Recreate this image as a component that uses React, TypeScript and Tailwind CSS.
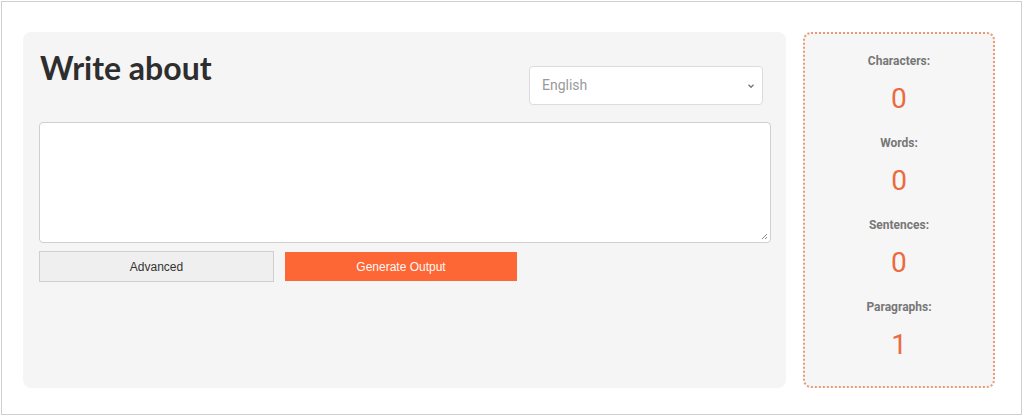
import React from "react";

const stats = [
  { label: "Characters:", value: "0" },
  { label: "Words:", value: "0" },
  { label: "Sentences:", value: "0" },
  { label: "Paragraphs:", value: "1" },
];

export default function App() {
  return (
    <div className="bg-white w-[1024px] h-[417px] pt-[1px] pl-[1px]" style={{ fontFamily: "Roboto, 'Liberation Sans', sans-serif" }}>
      <div className="w-[1021px] h-[414px] border border-[#cfcfcf] flex pl-[21px] pt-[30px] gap-[17px]">
        <div className="w-[763px] h-[356px] bg-[#f5f5f5] rounded-[8px] pl-[16px] pr-[15px]">
          <div className="flex justify-between items-start pr-[8px]">
            <h1 className="mt-[16px] ml-[1px] text-[32px] leading-[40px] font-bold text-[#2e2e2e]" style={{ fontFamily: "Lato, 'Noto Sans', sans-serif" }}>
              Write about
            </h1>
            <div className="mt-[34px] w-[234px] h-[39px] bg-white border border-[#dcdcdc] rounded-[4px] flex items-center justify-between pl-[12px] pr-[6px]">
              <span className="text-[14px] text-[#9a9a9a]">English</span>
              <svg width="10" height="10" viewBox="0 0 10 10" className="mt-[1px]">
                <path d="M2.5 3.8 L5 6.3 L7.5 3.8" fill="none" stroke="#777" strokeWidth="1.3" />
              </svg>
            </div>
          </div>
          <div className="mt-[17px] w-[732px] h-[121px] bg-white border border-[#cfcfcf] rounded-[4px] relative">
            <svg width="8" height="8" viewBox="0 0 8 8" className="absolute right-[2px] bottom-[2px]">
              <path d="M7 2 L2 7 M7 5 L5 7" stroke="#888" strokeWidth="1" />
            </svg>
          </div>
          <div className="mt-[8px] flex gap-[11px]" style={{ fontFamily: "'Liberation Sans', Arial, sans-serif" }}>
            <button className="w-[235px] h-[31px] bg-[#efefef] border border-[#cfcfcf] text-[12px] text-[#333]">
              Advanced
            </button>
            <button className="mt-[1px] w-[232px] h-[29px] bg-[#fd6635] text-[12px] text-[#fff8f4]">
              Generate Output
            </button>
          </div>
        </div>
        <div className="w-[192px] h-[356px] bg-[#f6f6f6] rounded-[8px] border-2 border-dotted border-[#eb9a78] flex flex-col items-center pt-[19px]">
          {stats.map((s) => (
            <div key={s.label} className="flex flex-col items-center mb-[20px]">
              <div className="text-[12px] leading-[16px] font-bold text-[#777]">{s.label}</div>
              <div className="mt-[14px] text-[28px] leading-[32px] text-[#ec6a3e]">{s.value}</div>
            </div>
          ))}
        </div>
      </div>
    </div>
  );
}
